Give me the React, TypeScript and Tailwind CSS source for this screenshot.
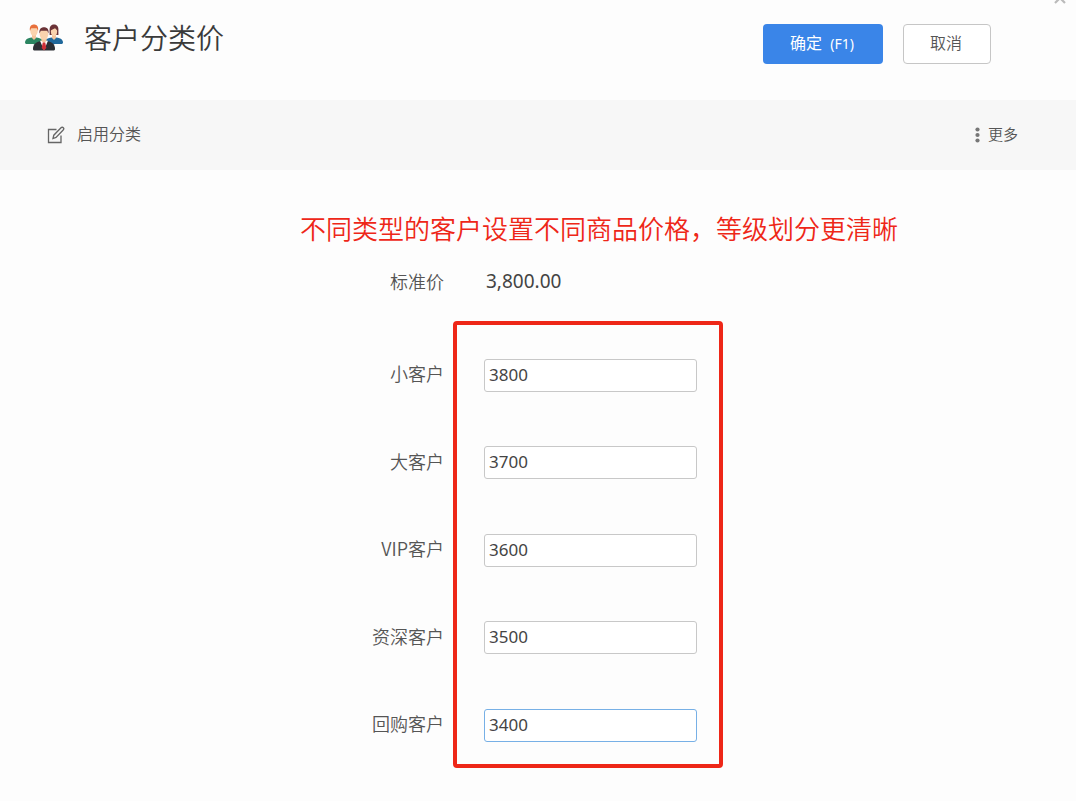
import { useState } from "react";

type PriceLevel = {
  id: string;
  name: string;
  price: string;
};

const standardPrice = "3,800.00";

const levels: PriceLevel[] = [
  { id: "small", name: "小客户", price: "3800" },
  { id: "large", name: "大客户", price: "3700" },
  { id: "vip", name: "VIP客户", price: "3600" },
  { id: "senior", name: "资深客户", price: "3500" },
  { id: "repeat", name: "回购客户", price: "3400" },
];

const CustomersIcon = () => (
  <svg viewBox="0 0 38 27" className="h-[27px] w-[38px]" aria-hidden="true">
    {/* left */}
    <path d="M0 19c0-4 3-5.500 9-5.500s9 1.500 9 5.500v1H1z" fill="#2b8561" />
    <path d="M7 10h4v4l-2 2-2-2z" fill="#f3c49c" />
    <ellipse cx="9" cy="7" rx="3.700" ry="5" fill="#fad3ae" />
    <path d="M5 7c-.8-4.500 1.200-6.500 4-6.500s4.800 2 4 6.500l-1.200-2.800H6.200z" fill="#e8703c" />
    {/* right */}
    <path d="M20 19c0-4 3-5.500 9-5.500s9 1.500 9 5.500l-1 1H20z" fill="#20689b" />
    <path d="M24.600 11V5.500c0-3.500 1.900-5 4.400-5s4.400 1.500 4.400 5V11z" fill="#6b3337" />
    <path d="M27 10h4v4l-2 2-2-2z" fill="#f3c49c" />
    <ellipse cx="29" cy="7.600" rx="3.100" ry="4.400" fill="#fad3ae" />
    <path d="M25.500 6.500c0-3 1.500-4.500 3.500-4.500s3.500 1.500 3.500 4.500L30 4.300z" fill="#6b3337" />
    {/* front */}
    <path d="M8 25c0-5 3-8 11-8s11 3 11 8c0 1-.8 1.600-2 1.600H10c-1.200 0-2-.6-2-1.600z" fill="#2d2f35" />
    <path d="M15 16.800h8L19 26z" fill="#fff" />
    <path d="M16.500 13h5v4L19 19l-2.500-2z" fill="#f3c49c" />
    <path d="M17.700 18.500h2.600l1 5.500-2.300 2.600-2.300-2.600z" fill="#cf3038" />
    <ellipse cx="19" cy="10.200" rx="4.300" ry="5.600" fill="#fad3ae" />
    <path d="M14.500 9.500c-.7-4.300 1.500-6.300 4.500-6.300s5.200 2 4.500 6.300l-1.300-2.800h-6.400z" fill="#6b3337" />
  </svg>
);

const EditIcon = () => (
  <svg
    viewBox="0 0 18 18"
    className="size-[18px]"
    fill="none"
    stroke="#666"
    strokeWidth="1.300"
    aria-hidden="true"
  >
    <path d="M9.500 3.500H1.500v13h12.500V9.500" />
    <path d="M6 12.500l.8-3.300 7.200-7.400c.7-.7 1.700-.7 2.300-.1s.6 1.600-.1 2.300l-7.200 7.400z" />
  </svg>
);

const MoreIcon = () => (
  <svg viewBox="0 0 5 16" className="h-4 w-[5px]" fill="#777" aria-hidden="true">
    <circle cx="2.500" cy="2.500" r="2.100" />
    <circle cx="2.500" cy="8" r="2.100" />
    <circle cx="2.500" cy="13.500" r="2.100" />
  </svg>
);

const CloseIcon = () => (
  <svg viewBox="0 0 12 12" className="size-3" stroke="currentColor" strokeWidth="2.200" aria-hidden="true">
    <path d="M1 1l10 10M11 1L1 11" />
  </svg>
);

const Header = () => (
  <header className="flex min-h-[100px] items-start pt-6 pr-[85px] pl-[25px]">
    <CustomersIcon />
    <h1 className="ml-[21px] text-[28px] leading-7 font-[350] text-[#3a3a3a]">客户分类价</h1>
    <div className="ml-auto flex gap-5">
      <button
        type="button"
        className="h-10 w-[120px] rounded bg-[#3a85e8] pr-0.5 pb-0.5 text-base text-white"
      >
        确定 <span className="ml-1 text-sm">(F1)</span>
      </button>
      <button
        type="button"
        className="h-10 w-[88px] rounded border border-[#c6c6c6] bg-white pr-0.5 pb-0.5 text-base font-[350] text-[#555]"
      >
        取消
      </button>
    </div>
  </header>
);

const Toolbar = () => (
  <nav className="flex min-h-[70px] items-center justify-between bg-[#f7f7f7] pr-[58px] pl-[47px] font-[350] text-[#555]">
    <button type="button" className="flex items-center gap-3 text-base">
      <EditIcon />
      <span className="pb-0.5">启用分类</span>
    </button>
    <button type="button" className="flex items-center gap-2 text-[15px]">
      <MoreIcon />
      <span className="pb-0.5">更多</span>
    </button>
  </nav>
);

const PriceForm = () => {
  const [prices, setPrices] = useState(() =>
    Object.fromEntries(levels.map((level) => [level.id, level.price])),
  );

  return (
    <form>
      <dl className="grid grid-cols-[3fr_4fr] items-center gap-x-10 text-lg">
        <dt className="text-right font-[350] text-[#555]">标准价</dt>
        <dd className="pl-0.5 text-[19px] text-[#444]">{standardPrice}</dd>
      </dl>
      <div className="relative mt-6 flex min-h-[447px] flex-col justify-between pt-[38px] pb-[26px]">
        {levels.map((level) => (
          <div key={level.id} className="grid grid-cols-[3fr_4fr] items-center gap-x-10">
            <label
              htmlFor={level.id}
              className="pb-1 text-right font-['Noto_Sans_CJK_SC',sans-serif] text-lg font-[350] text-[#555]"
            >
              {level.name}
            </label>
            <input
              id={level.id}
              type="text"
              inputMode="decimal"
              value={prices[level.id]}
              onChange={(e) => setPrices({ ...prices, [level.id]: e.target.value })}
              className={`h-[33px] w-[213px] rounded-[3px] border bg-white px-1 pb-0.5 text-[17px] text-[#444] outline-none ${
                level.id === "repeat" ? "border-[#77b0e6]" : "border-[#c8c8c8]"
              }`}
            />
          </div>
        ))}
        {/* highlight around the price column */}
        <div className="pointer-events-none absolute inset-0 grid grid-cols-[3fr_4fr] gap-x-10">
          <div className="col-start-2 -ml-[31px] w-[270px] rounded border-4 border-[#ee2718]" />
        </div>
      </div>
    </form>
  );
};

const App = () => (
  <div className="relative min-h-screen overflow-hidden bg-[#fdfdfd] font-['Noto_Sans','Noto_Sans_CJK_SC',sans-serif]">
    <Header />
    <button type="button" aria-label="关闭" className="absolute -top-2 right-[10px] text-[#bbb]">
      <CloseIcon />
    </button>
    <Toolbar />
    <main className="pt-[39px] pb-7">
      <p className="pl-[122px] text-center text-[26px] leading-10 font-[350] text-[#ee2718]">
        不同类型的客户设置不同商品价格，等级划分更清晰
      </p>
      <div className="mt-[18px]">
        <PriceForm />
      </div>
    </main>
  </div>
);

export default App;
